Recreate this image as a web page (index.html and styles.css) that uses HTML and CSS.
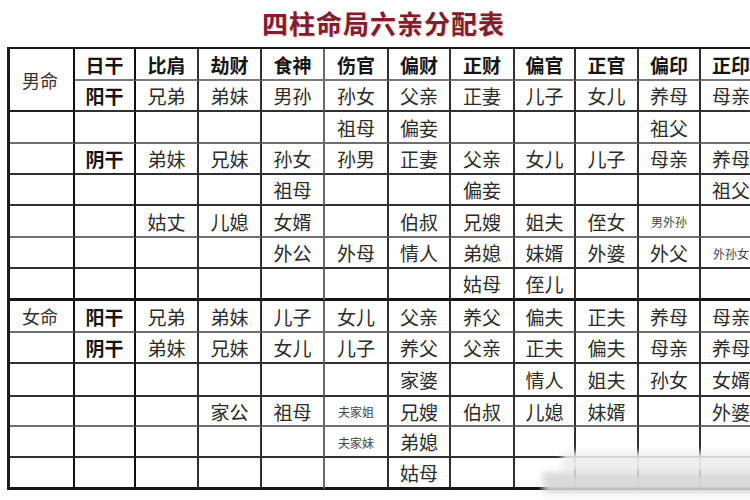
FILE: index.html
```html
<!DOCTYPE html>
<html lang="zh">
<head>
<meta charset="utf-8">
<title>四柱命局六亲分配表</title>
<link rel="stylesheet" href="styles.css">
</head>
<body>
<div class="page">
  <h1 class="title">四柱命局六亲分配表</h1>
  <div class="grid">
    <div class="row r0">
      <div class="side span2">男命</div><div class="b">日干</div><div class="b">比肩</div><div class="b">劫财</div><div class="b">食神</div><div class="b">伤官</div><div class="b">偏财</div><div class="b">正财</div><div class="b">偏官</div><div class="b">正官</div><div class="b">偏印</div><div class="b">正印</div>
    </div>
    <div class="row r1">
      <div class="b">阳干</div><div>兄弟</div><div>弟妹</div><div>男孙</div><div>孙女</div><div>父亲</div><div>正妻</div><div>儿子</div><div>女儿</div><div>养母</div><div>母亲</div>
    </div>
    <div class="row g">
      <div></div><div></div><div></div><div></div><div></div><div>祖母</div><div>偏妾</div><div></div><div></div><div></div><div>祖父</div><div></div>
    </div>
    <div class="row">
      <div></div><div class="b">阴干</div><div>弟妹</div><div>兄妹</div><div>孙女</div><div>孙男</div><div>正妻</div><div>父亲</div><div>女儿</div><div>儿子</div><div>母亲</div><div>养母</div>
    </div>
    <div class="row">
      <div></div><div></div><div></div><div></div><div>祖母</div><div></div><div></div><div>偏妾</div><div></div><div></div><div></div><div>祖父</div>
    </div>
    <div class="row g">
      <div></div><div></div><div>姑丈</div><div>儿媳</div><div>女婿</div><div></div><div>伯叔</div><div>兄嫂</div><div>姐夫</div><div>侄女</div><div class="sm">男外孙</div><div></div>
    </div>
    <div class="row">
      <div></div><div></div><div></div><div></div><div>外公</div><div>外母</div><div>情人</div><div>弟媳</div><div>妹婿</div><div>外婆</div><div>外父</div><div class="sm">外孙女</div>
    </div>
    <div class="row k">
      <div></div><div></div><div></div><div></div><div></div><div></div><div></div><div>姑母</div><div>侄儿</div><div></div><div></div><div></div>
    </div>
    <div class="row g">
      <div class="side">女命</div><div class="b">阳干</div><div>兄弟</div><div>弟妹</div><div>儿子</div><div>女儿</div><div>父亲</div><div>养父</div><div>偏夫</div><div>正夫</div><div>养母</div><div>母亲</div>
    </div>
    <div class="row">
      <div></div><div class="b">阴干</div><div>弟妹</div><div>兄妹</div><div>女儿</div><div>儿子</div><div>养父</div><div>父亲</div><div>正夫</div><div>偏夫</div><div>母亲</div><div>养母</div>
    </div>
    <div class="row">
      <div></div><div></div><div></div><div></div><div></div><div></div><div>家婆</div><div></div><div>情人</div><div>姐夫</div><div>孙女</div><div>女婿</div>
    </div>
    <div class="row g">
      <div></div><div></div><div></div><div>家公</div><div>祖母</div><div class="sm">夫家姐</div><div>兄嫂</div><div>伯叔</div><div>儿媳</div><div>妹婿</div><div></div><div>外婆</div>
    </div>
    <div class="row">
      <div></div><div></div><div></div><div></div><div></div><div class="sm">夫家妹</div><div>弟媳</div><div></div><div></div><div></div><div></div><div></div>
    </div>
    <div class="row last">
      <div></div><div></div><div></div><div></div><div></div><div></div><div>姑母</div><div></div><div></div><div></div><div></div><div></div>
    </div>
  </div>
  <div class="smudge smudge-top"></div>
  <div class="smudge smudge-bottom"></div>
</div>
</body>
</html>
```

FILE: styles.css
```css
html, body {
  margin: 0;
  padding: 0;
  background: #ffffff;
  overflow: hidden;
  width: 750px;
  height: 500px;
}

.page {
  position: relative;
  width: 750px;
  height: 500px;
  font-family: "Noto Sans CJK SC", "Noto Sans", sans-serif;
  color: #2a2a2a;
}

.title {
  margin: 0;
  height: 47px;
  padding-left: 262px;
  font-size: 26px;
  line-height: 46px;
  font-weight: 700;
  letter-spacing: 1px;
  color: #7e1f2d;
  text-shadow: 1px 1px 2px rgba(210, 90, 110, 0.35);
  white-space: nowrap;
}

.grid {
  margin-left: 7px;
  width: 760px;
  display: grid;
  grid-template-columns: 65px 61px 63px 63px 63px 64px 62px 64px 61px 63px 62px 62px;
  grid-template-rows: 32px 31px 32px 31px 31px 32px 31px 32px 32px 31px 33px 30px 31px 32px;
  border-top: 2px solid #1a1a1a;
  border-left: 3px solid #1a1a1a;
}

.row {
  display: contents;
}

.row > div {
  box-sizing: border-box;
  border-right: 2px solid #303030;
  border-bottom: 2px solid #303030;
  display: flex;
  align-items: center;
  justify-content: center;
  font-size: 19px;
  line-height: 1;
  white-space: nowrap;
  overflow: hidden;
  color: #2b2b2b;
}

.row > div:nth-child(1),
.row > div:nth-child(2) {
  border-right-color: #111;
}

.r1 > div:nth-child(2) {
  border-right-color: #303030;
}

.row > div:nth-child(5) {
  border-right-color: #6a6a6a;
}
.r1 > div:nth-child(5) {
  border-right-color: #303030;
}
.r1 > div:nth-child(4) {
  border-right-color: #6a6a6a;
}

.r0 > div {
  border-bottom-color: #7a7a7a;
}

.row.g > div {
  border-bottom-color: #6f6f6f;
}

.row.k > div,
.row.last > div {
  border-bottom: 3px solid #151515;
}

.row > .b {
  font-weight: 700;
  color: #151515;
}

.row > .side {
  color: #333;
  font-size: 18px;
  justify-content: flex-start;
  padding-left: 12px;
}

.row > .span2 {
  grid-row: span 2;
  border-bottom-color: #1f1f1f;
}

.row > .sm {
  font-size: 12px;
  color: #444;
  padding-top: 2px;
}

.smudge {
  position: absolute;
  filter: blur(3px);
}

.smudge-top {
  left: 562px;
  top: 452px;
  width: 200px;
  height: 22px;
  background: rgba(238, 238, 238, 0.93);
}

.smudge-bottom {
  left: 543px;
  top: 472px;
  width: 220px;
  height: 21px;
  background: rgba(216, 216, 216, 0.97);
}
```
